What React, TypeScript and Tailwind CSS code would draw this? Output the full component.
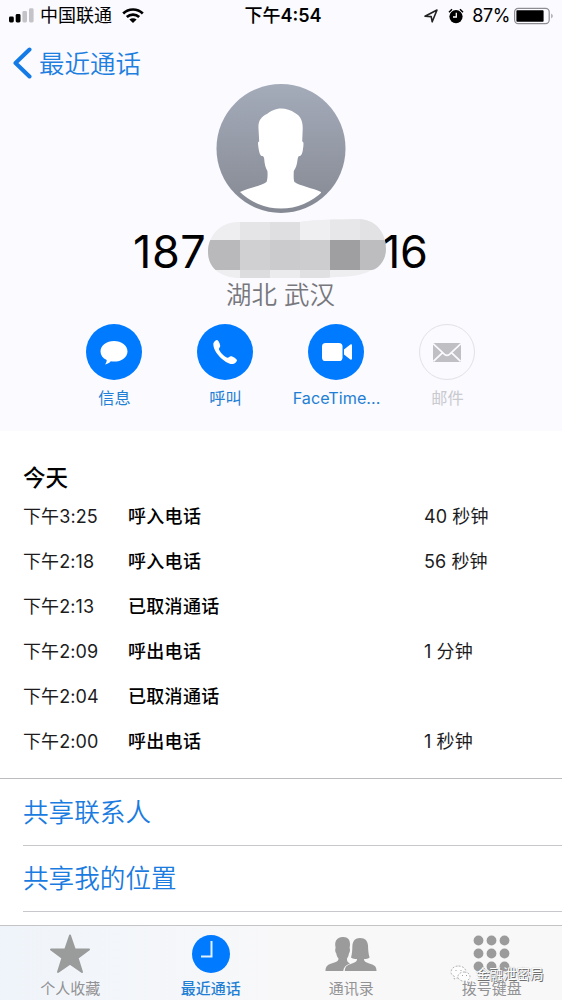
import React from 'react';

interface CallRecord {
  time: string;
  type: string;
  duration?: string;
}

const CALLS: CallRecord[] = [
  { time: '下午3:25', type: '呼入电话', duration: '40 秒钟' },
  { time: '下午2:18', type: '呼入电话', duration: '56 秒钟' },
  { time: '下午2:13', type: '已取消通话' },
  { time: '下午2:09', type: '呼出电话', duration: '1 分钟' },
  { time: '下午2:04', type: '已取消通话' },
  { time: '下午2:00', type: '呼出电话', duration: '1 秒钟' },
];

const StatusBar: React.FC = () => (
  <div className="grid h-8 grid-cols-[1fr_auto_1fr] items-center pl-[9px] pr-[7px] text-[18px] leading-8 text-black">
    <div className="flex items-center">
      <svg width="26" height="16" viewBox="0 0 26 16">
        <rect x="0" y="8.5" width="4.8" height="6" rx="1.4" fill="#000" />
        <rect x="6.7" y="6" width="4.8" height="8.5" rx="1.4" fill="#000" />
        <rect x="13.4" y="3" width="4.6" height="11.5" rx="1.4" fill="#c4c4c8" />
        <rect x="20" y="0.3" width="4.6" height="14.2" rx="1.4" fill="#c4c4c8" />
      </svg>
      <span className="ml-[5px]">中国联通</span>
      <svg width="22" height="16" viewBox="0 0 22 16" className="ml-[10px]" fill="none" stroke="#000" strokeWidth="2.7">
        <path d="M1.2 5.4C6.7 0.2 15.3 0.2 20.8 5.4" />
        <path d="M4.8 9.1C8.3 5.9 13.7 5.9 17.2 9.1" />
        <path d="M11 15L7.4 11.5C9.4 9.8 12.6 9.8 14.6 11.5Z" fill="#000" stroke="none" />
      </svg>
    </div>
    <div className="mr-[-2px] text-[18px] font-semibold">
      <span className="font-medium">下午</span>4:54
    </div>
    <div className="flex items-center justify-end">
      <svg width="14" height="14" viewBox="0 0 14 14" fill="none" stroke="#222" strokeWidth="1.6" strokeLinejoin="round">
        <path d="M1 7.2L13 1L8.2 12.8L7.2 7.6Z" />
      </svg>
      <svg width="16" height="16" viewBox="0 0 16 16" className="ml-[10px]">
        <circle cx="8" cy="8.6" r="6.6" fill="#000" />
        <path d="M1 4.2L4 1.3M15 4.2L12 1.3" stroke="#000" strokeWidth="1.5" />
        <path d="M8.3 4.8V9H5" stroke="#fff" strokeWidth="1.3" fill="none" />
      </svg>
      <span className="ml-[8px] tracking-[-0.4px]">87%</span>
      <svg width="40" height="18" viewBox="0 0 40 18" className="ml-[4px] mr-px">
        <rect x="0.6" y="1.3" width="34.6" height="15.4" rx="3.6" fill="none" stroke="#8e8e92" strokeWidth="1.2" />
        <rect x="2.4" y="3.3" width="27.2" height="11.4" rx="0.8" fill="#000" />
        <path d="M37.4 6.6Q39.8 9 37.4 11.6Z" fill="#8e8e92" />
      </svg>
    </div>
  </div>
);

const Avatar: React.FC = () => (
  <svg width="130" height="130" viewBox="0 0 130 130" className="mx-auto">
    <defs>
      <linearGradient id="avatarBg" x1="0" y1="0" x2="0" y2="1">
        <stop offset="0" stopColor="#a4abb9" />
        <stop offset="1" stopColor="#858993" />
      </linearGradient>
      <clipPath id="avatarClip">
        <circle cx="65" cy="65" r="59.5" />
      </clipPath>
    </defs>
    <circle cx="65" cy="64.5" r="64.5" fill="url(#avatarBg)" />
    <path
      clipPath="url(#avatarClip)"
      fill="#fff"
      d="M65 24.5C70 24.5 75 26 79 29C85 32 87 38 86.7 45L86.2 57.5C88 57.5 87.6 61 87 65C86.5 69 85.5 71.5 84 72C82.5 72 82 72.5 81.5 76C81 80 80 84 77.8 87C77.6 92 77.5 96 78.5 98C84 102 97 104 105 108V130H24V108C32 104 45 102 50.5 98C51.5 96 51.8 91 51.4 87C49.5 84 48.5 80 48.2 75C48 72.5 47 72 45.5 72C44 71 43 68 42.5 64C42 60 41.5 57.5 43.2 57.5L42.4 43C42.4 36 46 32 51 30C54 27 60 24.5 65 24.5Z"
    />
  </svg>
);

const NumberMask: React.FC = () => (
  <svg width="178" height="60" viewBox="0 0 178 60" className="absolute left-[208px] top-[5px]">
    <defs>
      <clipPath id="maskClip">
        <path d="M0 33C0 17 12 3 30 3H92C110 0 130 1 150 0C168 0 178 14 178 30C178 40 172 49 164 51C150 59 135 57 115 59H32C14 59 0 50 0 33Z" />
      </clipPath>
    </defs>
    <g clipPath="url(#maskClip)" shapeRendering="crispEdges">
      <rect width="178" height="60" fill="#eeeef1" />
      <rect x="32" y="0" width="30" height="21" fill="#e5e5e8" />
      <rect x="62" y="0" width="30" height="21" fill="#dfdfe2" />
      <rect x="92" y="0" width="30" height="21" fill="#efeff2" />
      <rect x="122" y="0" width="30" height="21" fill="#e7e7ea" />
      <rect x="152" y="0" width="26" height="21" fill="#e2e2e5" />
      <rect x="0" y="21" width="32" height="30" fill="#b9b9bb" />
      <rect x="32" y="21" width="30" height="30" fill="#d0d0d3" />
      <rect x="62" y="21" width="30" height="30" fill="#cbcbcd" />
      <rect x="92" y="21" width="30" height="30" fill="#cdcdd0" />
      <rect x="122" y="21" width="30" height="30" fill="#9f9fa1" />
      <rect x="152" y="21" width="26" height="30" fill="#bdbdc0" />
      <rect x="32" y="51" width="30" height="9" fill="#dcdcdf" />
      <rect x="62" y="51" width="30" height="9" fill="#ebebee" />
      <rect x="92" y="51" width="30" height="9" fill="#e0e0e3" />
    </g>
  </svg>
);

interface ActionButtonProps {
  label: string;
  disabled?: boolean;
  children: React.ReactNode;
}

const ActionButton: React.FC<ActionButtonProps> = ({ label, disabled = false, children }) => (
  <button className="flex w-[111px] flex-col items-center">
    <span
      className={`mr-[2px] flex size-14 items-center justify-center rounded-full ${
        disabled ? 'border-[1.5px] border-[#e2e2e6]' : 'bg-[#007aff]'
      }`}
    >
      {children}
    </span>
    <span
      className={`mt-[6px] whitespace-nowrap text-[16.2px] leading-6 ${
        disabled ? 'text-[#c9c9ce]' : 'text-[#1f7fd4]'
      }`}
    >
      {label}
    </span>
  </button>
);

const ContactHeader: React.FC = () => (
  <header className="h-[431px] bg-[#fafaff]">
    <StatusBar />
    <button className="flex h-[52px] items-center pl-3 pt-[10px] text-[25.5px] font-[350] text-[#1f7fe0]">
      <svg width="20" height="32" viewBox="0 0 20 32" fill="none" stroke="#147ae6" strokeWidth="4" strokeLinecap="round" strokeLinejoin="round">
        <path d="M17.5 2.5L3.5 16L17.5 29.5" />
      </svg>
      <span className="ml-[7px] mt-px leading-8">最近通话</span>
    </button>
    <Avatar />
    <div className="relative flex h-[66px] text-[45px] leading-[76px] text-black">
      <span className="w-[248px] pl-[133px] tracking-[0.6px]">187</span>
      <span className="pl-[134px] tracking-[-0.4px]">16</span>
      <NumberMask />
    </div>
    <div className="pr-px text-center text-[25.5px] font-[350] leading-[30px] text-[#77777c]">湖北 武汉</div>
    <div className="mt-[14px] flex justify-center">
      <ActionButton label="信息">
        <svg width="28" height="26" viewBox="0 0 28 26" fill="#fff">
          <path d="M14 2C21.5 2 27.5 6.5 27.5 12.4C27.5 18.2 21.5 22.6 14 22.6C12.8 22.6 11.8 22.5 10.8 22.3C9.4 24 7.4 25.2 5 25.4C6 24.4 6.7 22.8 6.7 21C2.8 19 0.5 16 0.5 12.4C0.5 6.5 6.5 2 14 2Z" />
        </svg>
      </ActionButton>
      <ActionButton label="呼叫">
        <svg width="26" height="26" viewBox="0 0 26 26" fill="#fff">
          <path d="M1.4 4.2C2.2 2.4 3.7 1 5 1C6.3 1 8.5 5.7 8.2 7.3C8 8.6 6.8 9 6.9 10.3C7.5 12.8 12.8 18.3 15.3 18.8C17 19 17.5 17.3 18.8 17.2C20.5 17 25 19.9 25 21.3C25 22.7 23.1 24.6 20.9 25C13.7 25.8 0.3 12.5 1.4 4.2Z" />
        </svg>
      </ActionButton>
      <ActionButton label="FaceTime...">
        <svg width="30" height="18" viewBox="0 0 30 18" fill="#fff" className="ml-[2px]">
          <rect x="0" y="0" width="20.5" height="18" rx="3.6" />
          <path d="M22 6.5L28.3 1.5Q30 0.8 30 2.4V15.6Q30 17.2 28.3 16.5L22 11.5Z" />
        </svg>
      </ActionButton>
      <ActionButton label="邮件" disabled>
        <svg width="28" height="19" viewBox="0 0 28 19">
          <rect width="28" height="19" fill="#bfbfc4" />
          <path d="M0 0.6L11.5 11.4Q14 13.4 16.5 11.4L28 0.6M0.4 18.4L9.6 9.6M27.6 18.4L18.4 9.6" fill="none" stroke="#fafaff" strokeWidth="1.7" />
        </svg>
      </ActionButton>
    </div>
  </header>
);

const CallHistory: React.FC = () => (
  <section className="h-[348px] border-b border-[#bcbcc0] pl-[23px] pt-[30px] text-black">
    <h2 className="h-[33px] text-[22.5px] font-medium leading-[33px]">今天</h2>
    {CALLS.map((call) => (
      <div key={call.time} className="flex h-[45px] items-center text-[18px] leading-[45px]">
        <span className="w-[104px] tracking-[0.1px] text-[#1c1c1e]">{call.time}</span>
        <span className="w-[297px] pl-px font-medium tracking-[0.3px]">{call.type}</span>
        <span className="tracking-[0.1px] text-[#1c1c1e]">{call.duration}</span>
      </div>
    ))}
  </section>
);

interface TabProps {
  label: string;
  active?: boolean;
  children: React.ReactNode;
}

const Tab: React.FC<TabProps> = ({ label, active = false, children }) => (
  <button
    className={`flex flex-1 flex-col items-center pt-2 text-[15px] ${
      active ? 'font-medium text-[#1f7fd4]' : 'text-[#929294]'
    }`}
  >
    <span className="flex h-[42px] items-center">{children}</span>
    <span className="mt-[4px] leading-[22px]">{label}</span>
  </button>
);

const TabBar: React.FC = () => (
  <nav className="relative flex h-[75px] border-t border-[#c4c4c6] bg-linear-to-r from-[#eff4fa] via-[#f8f8f9] via-50% to-[#f8f8f8]">
    <Tab label="个人收藏">
      <svg width="42" height="40" viewBox="0 0 42 40" fill="#9a9c9c" stroke="#9a9c9c" strokeWidth="2" strokeLinejoin="round">
        <path d="M21 1.5L25.8 15.5H40L28.6 24L33 38L21 29.6L9 38L13.4 24L2 15.5H16.2Z" />
      </svg>
    </Tab>
    <Tab label="最近通话" active>
      <svg width="38" height="38" viewBox="0 0 38 38">
        <circle cx="19" cy="19" r="19" fill="#007aff" />
        <path d="M19.5 6V21.5H9" fill="none" stroke="#e3f1ff" strokeWidth="2" />
      </svg>
    </Tab>
    <Tab label="通讯录">
      <svg width="52" height="36" viewBox="0 0 52 36" fill="#9b9b9b">
        <path d="M17.5 1C22.5 0.6 25.3 3.5 25 9L24.6 12C25.4 13 25 16.5 24 17.2C23.6 19.5 22.8 21.5 22 22.5C21.8 25 22.5 26 25 27.5C21 29 18.8 31 18.2 35H0.5C0.5 31.5 1.5 29.5 5 28C9 26.5 13.5 26 13.5 22.5C12.3 21.2 11.6 19.5 11.2 17.2C10.2 16.5 9.8 13 10.6 12L10.2 9C10 4.5 12.5 1.4 17.5 1Z" />
        <path d="M35 2C40.5 2 42.6 5 43 9.5C43.2 14.5 43.4 18 44.6 21.4C43.4 22.6 41 23 39 23C39 26.4 42.5 26.8 46.5 28.2C50.5 29.6 51.5 31.5 51.5 35H19.8C20 31.5 21 29.6 25 28.2C28.8 26.8 32 26.4 32 23C30 23 27.2 22.6 26 21.4C27.2 18 27.2 14.5 27.4 9.5C27.8 5 30 2 35 2Z" />
      </svg>
    </Tab>
    <Tab label="拨号键盘">
      <svg width="38" height="38" viewBox="0 0 38 38" fill="#9b9b9b">
        {[5.5, 18.5, 31.5].map((cy) =>
          [5.5, 18.5, 31.5].map((cx) => <circle key={`${cx}-${cy}`} cx={cx} cy={cy} r="4.9" />)
        )}
      </svg>
    </Tab>

    {/* 公众号水印 */}
    <div className="absolute left-[450px] top-[38px] flex items-center">
      <svg width="21" height="20" viewBox="0 0 21 20" fill="#fdfdfd" stroke="#a0a0a0" strokeWidth="0.8" strokeDasharray="2 1.5">
        <path d="M8.5 2C13 2 16 4.8 16 8C16 11.2 13 13.6 8.5 13.6L4 15L4.5 12.5C2 11.3 1 9.8 1 8C1 4.8 4 2 8.5 2Z" />
        <path d="M14 8C17.8 8 20 10.2 20 12.5C20 14.2 19 15.5 17.6 16.4L18 18.5L15.5 17.2C11 17.6 8 15.5 8 12.5C8 10.2 10.5 8 14 8Z" />
        <path d="M5.5 6.5H6.5M10.5 6.5H11.5M12 11.5H13M16 11.5H17" stroke="#888" strokeDasharray="none" />
      </svg>
      <span className="ml-[5px] text-[13.5px] leading-5 text-white [text-shadow:1px_1px_0_#6f6f6f,0_0_1px_#8a8a8a]">
        金融泄密局
      </span>
    </div>
  </nav>
);

const ROW_CLASS = 'block w-full border-b border-[#c8c8cc] text-left text-[25.6px] font-[350] text-[#1a7be0]';

export default function App() {
  return (
    <div className="flex h-[1000px] w-[562px] flex-col overflow-hidden bg-white font-['Inter','Noto_Sans_CJK_SC',sans-serif]">
      <ContactHeader />
      <CallHistory />
      <div className="flex-1 pl-[23px]">
        <button className={`${ROW_CLASS} h-[67px] leading-[67px]`}>共享联系人</button>
        <button className={`${ROW_CLASS} h-[66px] leading-[66px]`}>共享我的位置</button>
      </div>
      <TabBar />
    </div>
  );
}
